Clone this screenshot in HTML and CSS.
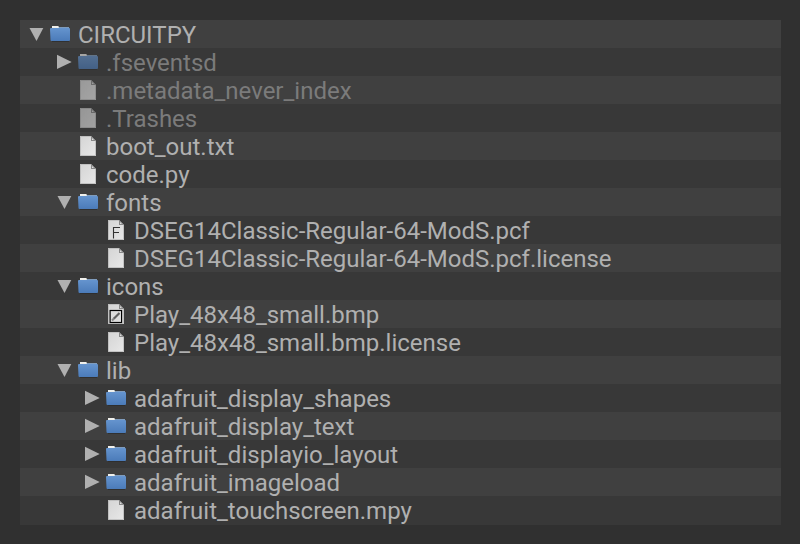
FILE: index.html
```
<!DOCTYPE html>
<html lang="en"><head><meta charset="utf-8"><title>CIRCUITPY</title><link rel="stylesheet" href="styles.css"></head>
<body>
<svg class="defs" aria-hidden="true">
<defs>
<linearGradient id="blue" x1="0" y1="0" x2="0" y2="1"><stop offset="0" stop-color="#6594ce"/><stop offset="1" stop-color="#4b7bb9"/></linearGradient>
<linearGradient id="paper" x1="0" y1="0" x2="1" y2="1"><stop offset="0" stop-color="#d4d4d4"/><stop offset="1" stop-color="#e8e8e8"/></linearGradient>
<symbol id="folder" viewBox="0 0 20 20"><path d="M2 17h17v1H2z" fill="#282828" opacity=".6"/><path d="M2 3h17v2H2z" fill="#7f9cbd"/><path d="M2 2h6.500l.5 2.500H2z" fill="#f0f0ec"/><path d="M1 4h18q1 0 1 1v11q0 1-1 1H1.500q-1 0-1-1L0 5q0-1 1-1z" fill="url(#blue)"/></symbol>
<symbol id="file" viewBox="0 0 20 20"><path d="M2 0h11l5 5v15H2z" fill="url(#paper)"/><path d="M2.500 20V.5H13M17.500 5v14.500H2" fill="none" stroke="#b4b4b4" stroke-width=".7"/><path d="M13 0v5h5z" fill="#888"/><path d="M14 2v2h2z" fill="#ddd"/></symbol>
<symbol id="font" viewBox="0 0 20 20"><use href="#file"/><path d="M7.500 18.500V7.500H14M7.500 12.500h5.500" fill="none" stroke="#333" stroke-width="1.100"/></symbol>
<symbol id="image" viewBox="0 0 20 20"><use href="#file"/><rect x="4.100" y="6.500" width="11.500" height="12" fill="#ddd" stroke="#000" stroke-width="1.200"/><path d="M6 16.500l2.500-2.500" stroke="#888" stroke-width="2.200"/><path d="M8 14.500l5.500-5.500" stroke="#606060" stroke-width="2.200"/></symbol>
<symbol id="down" viewBox="0 0 16 16"><path d="M1.500 2h13.800L8.500 15z" fill="#b0b0b0"/></symbol>
<symbol id="right" viewBox="0 0 16 16"><path d="M1 .8v14.200l14.700-7.100z" fill="#b0b0b0"/></symbol>
</defs></svg>
<ul class="tree">
<li class="row"><svg class="arrow"><use href="#down"/></svg><svg class="icon"><use href="#folder"/></svg><span>CIRCUITPY</span></li>
<li class="row level-1 hidden"><svg class="arrow"><use href="#right"/></svg><svg class="icon"><use href="#folder"/></svg><span>.fseventsd</span></li>
<li class="row level-1 hidden"><i class="arrow"></i><svg class="icon"><use href="#file"/></svg><span>.metadata_never_index</span></li>
<li class="row level-1 hidden"><i class="arrow"></i><svg class="icon"><use href="#file"/></svg><span>.Trashes</span></li>
<li class="row level-1"><i class="arrow"></i><svg class="icon"><use href="#file"/></svg><span>boot_out.txt</span></li>
<li class="row level-1"><i class="arrow"></i><svg class="icon"><use href="#file"/></svg><span>code.py</span></li>
<li class="row level-1"><svg class="arrow"><use href="#down"/></svg><svg class="icon"><use href="#folder"/></svg><span>fonts</span></li>
<li class="row level-2"><i class="arrow"></i><svg class="icon"><use href="#font"/></svg><span>DSEG14Classic-Regular-64-ModS.pcf</span></li>
<li class="row level-2"><i class="arrow"></i><svg class="icon"><use href="#file"/></svg><span>DSEG14Classic-Regular-64-ModS.pcf.license</span></li>
<li class="row level-1"><svg class="arrow"><use href="#down"/></svg><svg class="icon"><use href="#folder"/></svg><span>icons</span></li>
<li class="row level-2"><i class="arrow"></i><svg class="icon"><use href="#image"/></svg><span>Play_48x48_small.bmp</span></li>
<li class="row level-2"><i class="arrow"></i><svg class="icon"><use href="#file"/></svg><span>Play_48x48_small.bmp.license</span></li>
<li class="row level-1"><svg class="arrow"><use href="#down"/></svg><svg class="icon"><use href="#folder"/></svg><span>lib</span></li>
<li class="row level-2"><svg class="arrow"><use href="#right"/></svg><svg class="icon"><use href="#folder"/></svg><span>adafruit_display_shapes</span></li>
<li class="row level-2"><svg class="arrow"><use href="#right"/></svg><svg class="icon"><use href="#folder"/></svg><span>adafruit_display_text</span></li>
<li class="row level-2"><svg class="arrow"><use href="#right"/></svg><svg class="icon"><use href="#folder"/></svg><span>adafruit_displayio_layout</span></li>
<li class="row level-2"><svg class="arrow"><use href="#right"/></svg><svg class="icon"><use href="#folder"/></svg><span>adafruit_imageload</span></li>
<li class="row level-2"><i class="arrow"></i><svg class="icon"><use href="#file"/></svg><span>adafruit_touchscreen.mpy</span></li>
</ul>
</body></html>
```
FILE: styles.css
```
body { margin: 0; padding: 20px; background: #303030; font: 24px/28px Roboto, sans-serif; color: #b0b0b0; }
.defs { position: absolute; width: 0; height: 0; }
.tree { list-style: none; margin: 0; padding: 0 0 1px; width: 761px; background: #383838; }
.row { display: flex; align-items: center; height: 28px; padding-left: 8px; background: #383838; white-space: nowrap; }
.row:nth-child(odd) { background: #404040; }
.level-1 { padding-left: 36px; }
.level-2 { padding-left: 64px; }
.arrow { width: 16px; height: 16px; flex: none; margin-right: 6px; }
.icon { width: 20px; height: 20px; flex: none; margin-right: 8px; }
.row span { padding-top: 2px; }
.hidden span { color: #7b7b7b; }
.hidden .icon { opacity: .6; }
```
